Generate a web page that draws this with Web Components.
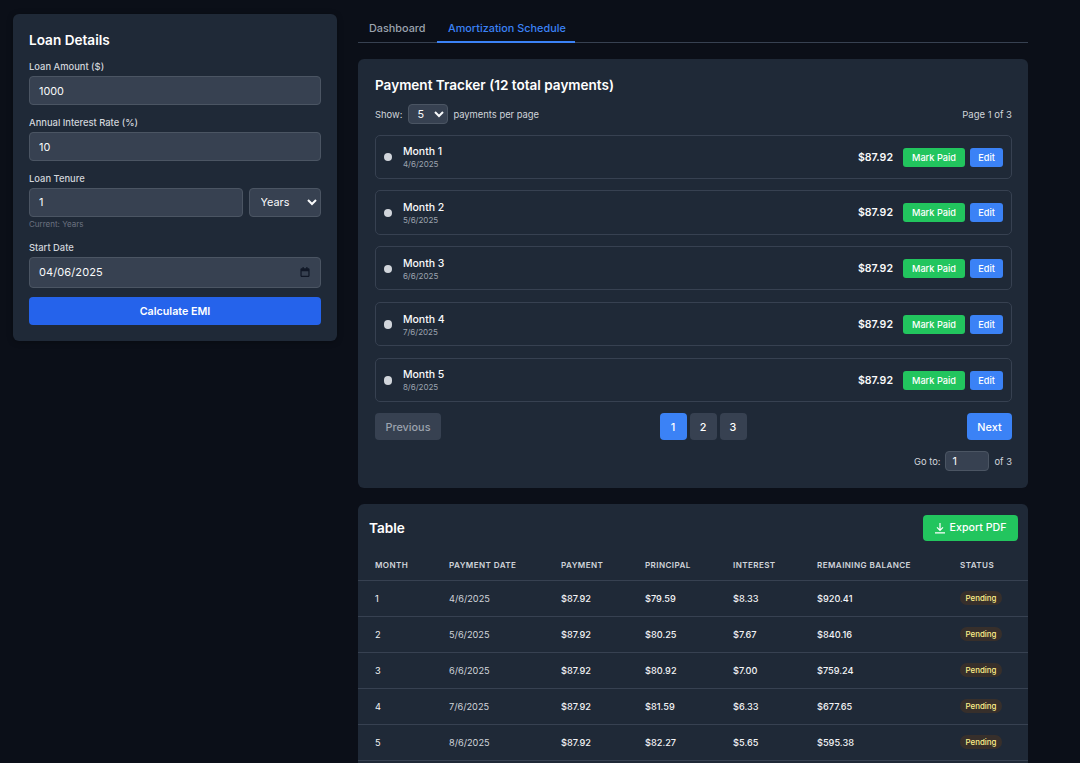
<!DOCTYPE html>
<html lang="en">
<head>
<meta charset="utf-8">
<title>EMI Calculator</title>
<style>
  html, body { margin: 0; height: 100%; overflow: hidden; background: #0b0f18; }
  body { font-family: Inter, "Liberation Sans", sans-serif; color: #f9fafb; }
</style>
</head>
<body>
<emi-app></emi-app>
<script>
const baseCss = `
  * { box-sizing: border-box; }
  input, select, button { font-family: inherit; margin: 0; }
  .ctl {
    display: block; width: 100%; background: #374151; color: #f9fafb;
    border: 1px solid #4b5563; border-radius: 4px; outline: none;
  }
`;

class LoanForm extends HTMLElement {
  constructor() {
    super();
    this.attachShadow({ mode: 'open' });
  }
  connectedCallback() {
    this.shadowRoot.innerHTML = `
      <style>
        ${baseCss}
        :host {
          display: block; background: #1f2937; border-radius: 6px; padding: 16px;
          box-shadow: 0 1px 6px rgba(0,0,0,.3);
        }
        h2 { margin: 0 0 9.5px; font-size: 13.6px; line-height: 21px; font-weight: 600; color: #fff; }
        label { display: block; font-size: 9.4px; line-height: 12px; font-weight: 500; color: #d1d5db; margin-bottom: 3.5px; }
        .group { margin-bottom: 11.5px; }
        .ctl { height: 29px; font-size: 10.85px; padding: 0 9px; }
        .row { display: flex; gap: 6px; }
        .row input { flex: 1; min-width: 0; padding-bottom: 2px; }
        .row select { width: 72px; flex: none; padding: 0 0 1px 6.5px; }
        small { display: block; font-size: 8px; line-height: 12px; color: #6b7280; margin-top: 1px; }
        .date { display: flex; align-items: center; justify-content: space-between; height: 31px; padding-bottom: 1.5px; }
        .date span { font-size: 11px; letter-spacing: .1px; }
        .date svg { display: block; margin-right: 1px; }
        button {
          display: block; width: 100%; height: 27.5px; background: #2563eb; color: #fff; border: 0;
          border-radius: 4px; font-size: 10.7px; font-weight: 600; padding: 1px 0 0;
        }
      </style>
      <h2>Loan Details</h2>
      <div class="group"><label>Loan Amount ($)</label><input class="ctl" value="1000"></div>
      <div class="group"><label>Annual Interest Rate (%)</label><input class="ctl" value="10"></div>
      <div class="group">
        <label>Loan Tenure</label>
        <div class="row">
          <input class="ctl" value="1">
          <select class="ctl"><option>Years</option><option>Months</option></select>
        </div>
        <small>Current: Years</small>
      </div>
      <div class="group" style="margin-bottom:9px">
        <label>Start Date</label>
        <div class="ctl date">
          <span>04/06/2025</span>
          <svg width="10" height="10" viewBox="0 0 12 12"><path fill="#111827" d="M3 0h1.500v1.500h3V0H9v1.500h1c.8 0 1.500.7 1.500 1.500v7.500c0 .8-.7 1.500-1.500 1.500H2c-.8 0-1.500-.7-1.500-1.500V3c0-.8.7-1.500 1.500-1.500h1zM2 5v5.500h8V5z"/></svg>
        </div>
      </div>
      <button type="button">Calculate EMI</button>
    `;
  }
}

class AppTabs extends HTMLElement {
  constructor() {
    super();
    this.attachShadow({ mode: 'open' });
  }
  connectedCallback() {
    this.shadowRoot.innerHTML = `
      <style>
        :host { display: flex; box-sizing: border-box; border-bottom: 1px solid #374151; height: 29px; }
        div { box-sizing: border-box; flex: none; white-space: nowrap; font-size: 10.85px; line-height: 28px; font-weight: 500; color: #9ca3af; height: 29px; }
        .off { padding-left: 11px; width: 79px; }
        .on { color: #3b82f6; border-bottom: 2px solid #3b82f6; width: 138px; padding-left: 11px; }
      </style>
      <div class="off">Dashboard</div><div class="on">Amortization Schedule</div>
    `;
  }
}

class PaymentRow extends HTMLElement {
  constructor() {
    super();
    this.attachShadow({ mode: 'open' });
  }
  connectedCallback() {
    const month = this.getAttribute('month');
    const date = this.getAttribute('date');
    const amount = this.getAttribute('amount');
    this.shadowRoot.innerHTML = `
      <style>
        * { box-sizing: border-box; }
        :host {
          display: flex; box-sizing: border-box; align-items: center; height: 44.3px; padding: 1px 8px 0 7.5px;
          border: 1px solid #374151; border-radius: 5px;
        }
        i { width: 8.4px; height: 8.4px; border-radius: 50%; background: #d1d5db; margin-right: 11px; flex: none; }
        .info { flex: 1; padding-top: 1px; }
        .name { font-size: 10.5px; line-height: 14px; font-weight: 500; color: #f9fafb; }
        .date { font-size: 8px; line-height: 11px; color: #9ca3af; }
        .amt { font-size: 10.6px; font-weight: 600; color: #f9fafb; margin-right: 10px; }
        button {
          font-family: inherit; height: 19px; border: 0; border-radius: 3px; color: #fff;
          font-size: 9.2px; font-weight: 500; margin: 0;
        }
        .paid { background: #22c55e; margin-right: 5px; width: 62px; padding: 0; }
        .edit { background: #3b82f6; width: 33px; padding: 0; }
      </style>
      <i></i>
      <div class="info"><div class="name">Month ${month}</div><div class="date">${date}</div></div>
      <span class="amt">${amount}</span>
      <button class="paid" type="button">Mark Paid</button>
      <button class="edit" type="button">Edit</button>
    `;
  }
}

class PayPager extends HTMLElement {
  constructor() {
    super();
    this.attachShadow({ mode: 'open' });
  }
  connectedCallback() {
    this.shadowRoot.innerHTML = `
      <style>
        ${baseCss}
        :host { display: block; font-size: 9.4px; color: #d1d5db; }
        .bar { display: flex; justify-content: space-between; align-items: center; }
        .nums { display: flex; gap: 3px; margin-right: 2px; }
        button {
          height: 27.5px; border: 0; border-radius: 4px; background: #374151; color: #fff;
          font-size: 10.85px; font-weight: 500; padding: 0;
        }
        .num { width: 27px; }
        .on, .next { background: #3b82f6; }
        .prev { color: #9ca3af; width: 66px; }
        .next { width: 45px; }
        .goto { display: flex; justify-content: flex-end; align-items: center; gap: 5px; margin-top: 10.5px; }
        .goto input { width: 44px; height: 20.5px; font-size: 10.85px; padding: 0 6px; }
      </style>
      <div class="bar">
        <button class="prev" type="button">Previous</button>
        <div class="nums">
          <button class="num on" type="button">1</button>
          <button class="num" type="button">2</button>
          <button class="num" type="button">3</button>
        </div>
        <button class="next" type="button">Next</button>
      </div>
      <div class="goto"><span>Go to:</span><input class="ctl" value="1"><span>of 3</span></div>
    `;
  }
}

class PaymentTracker extends HTMLElement {
  constructor() {
    super();
    this.attachShadow({ mode: 'open' });
  }
  connectedCallback() {
    this.shadowRoot.innerHTML = `
      <style>
        ${baseCss}
        :host { display: block; background: #1f2937; border-radius: 6px; padding: 16px 16px 16.5px 17px; }
        h2 { margin: 0 0 9px; font-size: 13.55px; line-height: 20px; font-weight: 600; color: #fff; }
        .opts { display: flex; align-items: center; font-size: 9.4px; color: #d1d5db; height: 20px; margin-bottom: 10.5px; }
        .opts select { width: 40px; height: 19.5px; margin: 0 5px 0 6px; font-size: 10.85px; padding: 0 0 0 4px; }
        .opts .page { margin-left: auto; font-size: 9.5px; }
        .list { display: flex; flex-direction: column; gap: 11.5px; margin-bottom: 11px; }
        ::slotted(*) { flex: none; }
      </style>
      <h2>Payment Tracker (12 total payments)</h2>
      <div class="opts">
        <span>Show:</span>
        <select class="ctl"><option>5</option><option>10</option></select>
        <span>payments per page</span>
        <span class="page">Page 1 of 3</span>
      </div>
      <div class="list"><slot></slot></div>
      <pay-pager></pay-pager>
    `;
  }
}

class StatusBadge extends HTMLElement {
  constructor() {
    super();
    this.attachShadow({ mode: 'open' });
  }
  connectedCallback() {
    this.shadowRoot.innerHTML = `
      <style>
        :host {
          display: inline-block; background: rgba(113,63,18,.3); color: #fef08a; border-radius: 7px;
          font-size: 7.9px; line-height: 14px; font-weight: 500; padding: 0 5.5px;
        }
      </style><slot></slot>
    `;
  }
}

class ScheduleTable extends HTMLElement {
  constructor() {
    super();
    this.attachShadow({ mode: 'open' });
  }
  connectedCallback() {
    const rows = JSON.parse(this.getAttribute('rows'));
    const body = rows.map(r => `
      <tr><td>${r.month}</td><td class="muted">${r.date}</td><td class="b">${r.payment}</td><td class="b">${r.principal}</td>
      <td class="b">${r.interest}</td><td class="b">${r.balance}</td><td><status-badge>Pending</status-badge></td></tr>`).join('');
    this.shadowRoot.innerHTML = `
      <style>
        * { box-sizing: border-box; }
        :host { display: block; background: #1f2937; border-radius: 6px; }
        header { display: flex; justify-content: space-between; align-items: center; height: 48px; padding: 0 10.5px 0 11px; }
        h2 { margin: 0; font-size: 13.6px; font-weight: 600; color: #fff; }
        button {
          display: flex; align-items: center; gap: 4px; height: 26.5px; width: 95px; justify-content: center;
          background: #22c55e; border: 0; border-radius: 4px; color: #fff; font-family: inherit; font-size: 10.65px; font-weight: 500; padding: 0;
        }
        table { width: 100%; border-collapse: collapse; table-layout: fixed; }
        th, td { padding: 0 0 0 17px; text-align: left; }
        th { height: 28.5px; padding-bottom: 2px; font-size: 8.1px; font-weight: 600; letter-spacing: .4px; text-transform: uppercase; color: #d1d5db; border-bottom: 1px solid #374151; }
        td { height: 36px; font-size: 9.2px; font-weight: 400; color: #f3f4f6; border-bottom: 1px solid #374151; }
        td.b { font-weight: 500; }
        td.muted { color: #d1d5db; }
      </style>
      <header>
        <h2>Table</h2>
        <button type="button">
          <svg width="12" height="12" viewBox="0 0 12 12" fill="none" stroke="#fff" stroke-width="1.2"><path d="M6 1v7.200M3 5.400 6 8.400l3-3M1 10.800h10"/></svg>
          Export PDF
        </button>
      </header>
      <table>
        <colgroup><col style="width:74px"><col style="width:112px"><col style="width:84px"><col style="width:88px"><col style="width:84px"><col style="width:143px"><col></colgroup>
        <thead><tr><th>Month</th><th>Payment Date</th><th>Payment</th><th>Principal</th><th>Interest</th><th>Remaining Balance</th><th>Status</th></tr></thead>
        <tbody>${body}</tbody>
      </table>
    `;
  }
}

class EmiApp extends HTMLElement {
  constructor() {
    super();
    this.attachShadow({ mode: 'open' });
  }
  connectedCallback() {
    const emi = 87.92, rate = 10 / 1200;
    let bal = 1000;
    const money = n => '$' + n.toFixed(2);
    const rows = [];
    for (let i = 0; i < 12; i++) {
      const interest = bal * rate;
      const principal = emi - interest;
      bal = Math.max(0, bal - principal);
      const m = (3 + i) % 12 + 1;
      const y = i < 9 ? 2025 : 2026;
      rows.push({ month: i + 1, date: `${m}/6/${y}`, payment: money(emi), principal: money(principal), interest: money(interest), balance: money(bal) });
    }
    const tracker = rows.slice(0, 5).map(r =>
      `<payment-row month="${r.month}" date="${r.date}" amount="${r.payment}"></payment-row>`).join('');
    this.shadowRoot.innerHTML = `
      <style>
        :host { display: grid; grid-template-columns: 324px 670px; column-gap: 21px; align-items: start; padding: 14px 0 0 13px; }
        .main { display: flex; flex-direction: column; }
        payment-tracker { margin: 16px 0; }
      </style>
      <loan-form></loan-form>
      <div class="main">
        <app-tabs></app-tabs>
        <payment-tracker>${tracker}</payment-tracker>
        <schedule-table rows='${JSON.stringify(rows)}'></schedule-table>
      </div>
    `;
  }
}

customElements.define('loan-form', LoanForm);
customElements.define('app-tabs', AppTabs);
customElements.define('payment-row', PaymentRow);
customElements.define('pay-pager', PayPager);
customElements.define('payment-tracker', PaymentTracker);
customElements.define('status-badge', StatusBadge);
customElements.define('schedule-table', ScheduleTable);
customElements.define('emi-app', EmiApp);
</script>
</body>
</html>
